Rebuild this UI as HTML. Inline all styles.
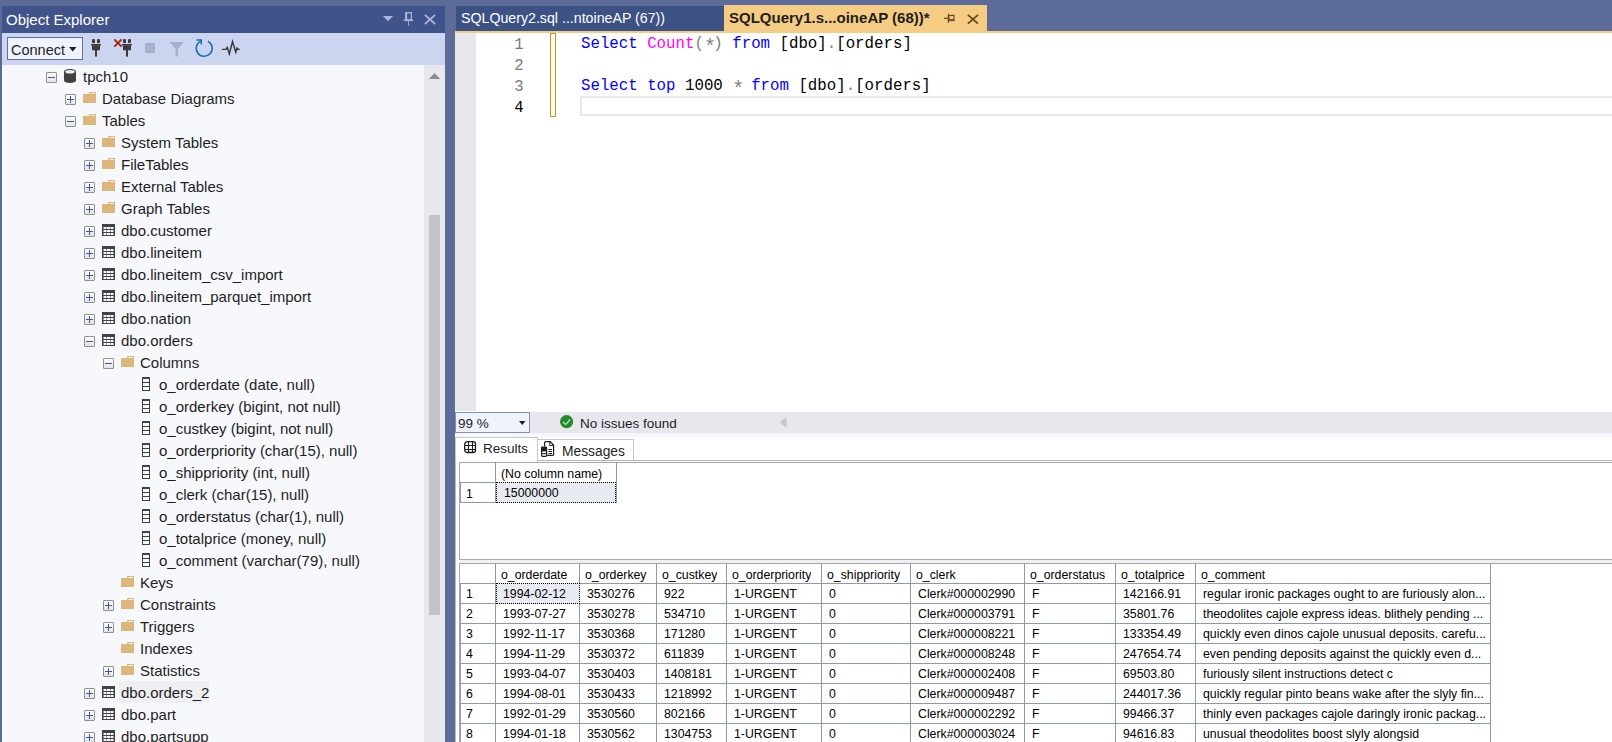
<!DOCTYPE html><html><head><meta charset="utf-8"><style>
*{margin:0;padding:0;box-sizing:border-box}
html,body{width:1612px;height:742px;overflow:hidden;background:#5d6b99;font-family:"Liberation Sans",sans-serif;position:relative}
.a{position:absolute}
.t{position:absolute;white-space:pre;font-family:"Liberation Sans",sans-serif}
.tr{position:absolute;white-space:pre;font-size:15px;line-height:22px;color:#1e1e1e;height:22px}
.cd{position:absolute;white-space:pre;font-family:"Liberation Mono",monospace;font-size:15.75px;line-height:21px;height:21px}
.ln{position:absolute;width:40px;text-align:right;font-family:"Liberation Mono",monospace;font-size:15.6px;line-height:21px;color:#7a7a7a}
.g{position:absolute;white-space:pre;font-size:12.3px;line-height:20px;color:#000;overflow:hidden}
svg{position:absolute;overflow:visible}
</style></head><body>
<div class="a" style="left:2px;top:6px;width:443px;height:27px;background:#40538a"></div>
<div class="t" style="left:6px;top:9px;font-size:15px;line-height:22px;color:#fff">Object Explorer</div>
<svg style="left:383px;top:16px" width="10" height="6"><path d="M0 0 H10 L5 5.2 Z" fill="#a9b3db"/></svg>
<svg style="left:403px;top:11px" width="11" height="16"><rect x="2.65" y="1.65" width="5.7" height="7.2" fill="none" stroke="#a9b3db" stroke-width="1.3"/><rect x="2" y="1" width="2.2" height="8" fill="#a9b3db"/><rect x="0.8" y="8.5" width="9.4" height="1.6" fill="#a9b3db"/><rect x="5.05" y="10" width="0.9" height="5" fill="#a9b3db"/></svg>
<svg style="left:424px;top:13.5px" width="12" height="11"><path d="M0.9 0.9 L11.1 10 M11.1 0.9 L0.9 10" stroke="#a9b3db" stroke-width="1.9"/></svg>
<div class="a" style="left:2px;top:33px;width:443px;height:32px;background:#ccd5f0"></div>
<div class="a" style="left:7px;top:37px;width:76px;height:23px;background:#eef3fd;border:1px solid #5f6f9f"></div>
<div class="t" style="left:11px;top:40px;font-size:14.5px;line-height:20px;color:#1e1e1e">Connect</div>
<svg style="left:69px;top:47px" width="8" height="5"><path d="M0 0 H7.5 L3.75 4.5Z" fill="#1e1e1e"/></svg>
<svg style="left:90px;top:39px" width="12" height="18"><rect x="2" y="0" width="3" height="4.2" rx="1.3" fill="#3c3c3c"/><rect x="7" y="0" width="3" height="4.2" rx="1.3" fill="#3c3c3c"/><path d="M1 5 H11 L10.6 6.8 H1.4 Z" fill="#3c3c3c"/><rect x="2" y="6.5" width="8" height="4.8" fill="#3c3c3c"/><rect x="5" y="11" width="2" height="6.6" fill="#3c3c3c"/></svg>
<svg style="left:121px;top:39px" width="12" height="18"><rect x="2" y="0" width="3" height="4.2" rx="1.3" fill="#3c3c3c"/><rect x="7" y="0" width="3" height="4.2" rx="1.3" fill="#3c3c3c"/><path d="M1 5 H11 L10.6 6.8 H1.4 Z" fill="#3c3c3c"/><rect x="2" y="6.5" width="8" height="4.8" fill="#3c3c3c"/><rect x="5" y="11" width="2" height="6.6" fill="#3c3c3c"/></svg>
<svg style="left:113px;top:38px" width="10" height="10"><path d="M1.3 1.4 L8.6 8.6 M8.6 1.4 L1.3 8.6" stroke="#a52414" stroke-width="1.9"/></svg>
<div class="a" style="left:145px;top:43px;width:10px;height:10px;background:#a9b1c9"></div>
<svg style="left:169px;top:41px" width="16" height="16"><path d="M0.5 1 H15 L9 8 V15.5 H6.5 V8 Z" fill="#a9b1c9"/></svg>
<svg style="left:194px;top:37px" width="20" height="20"><path d="M7.2 3.9 A8 8 0 1 0 13.96 4.24" fill="none" stroke="#1a6fb8" stroke-width="1.5"/><path d="M2.4 2.9 H7.3 V7.6" fill="none" stroke="#1a6fb8" stroke-width="1.5"/></svg>
<svg style="left:221px;top:41px" width="20" height="14"><path d="M1 8.4 H5 L6.3 6.4 L8.3 12.9 L11.5 0.5 L14.8 11.3 L16 7 L17 8.4 H18.8" fill="none" stroke="#333" stroke-width="1.4" stroke-linejoin="miter"/></svg>
<div class="a" style="left:2px;top:65px;width:422px;height:677px;background:#f6f8fc"></div>
<div class="a" style="left:424px;top:65px;width:21px;height:677px;background:#e8e8ec"></div>
<svg style="left:429px;top:73px" width="12" height="7"><path d="M0 6 L5.6 0 L11.2 6Z" fill="#868999"/></svg>
<div class="a" style="left:429px;top:215px;width:11px;height:400px;background:#c2c3c9"></div>
<div class="a" style="left:46px;top:72px;width:11px;height:11px;border:1px solid #909090;border-radius:1px;background:linear-gradient(#fdfdfd,#e3e3e3)"></div><div class="a" style="left:48px;top:77px;width:7px;height:1px;background:#3c5aa0"></div>
<svg style="left:64px;top:69px" width="12" height="14"><path d="M0 2.5 A6 2.5 0 0 1 12 2.5 V11.5 A6 2.5 0 0 1 0 11.5 Z" fill="#424242"/><ellipse cx="6" cy="2.8" rx="4.8" ry="1.8" fill="#f0f0f2"/></svg>
<div class="tr" style="left:83px;top:65.5px">tpch10</div>
<div class="a" style="left:65px;top:94px;width:11px;height:11px;border:1px solid #909090;border-radius:1px;background:linear-gradient(#fdfdfd,#e3e3e3)"></div><div class="a" style="left:67px;top:99px;width:7px;height:1px;background:#3c5aa0"></div><div class="a" style="left:70px;top:96px;width:1px;height:7px;background:#3c5aa0"></div>
<svg style="left:83px;top:92px" width="13" height="11"><path d="M0 2 H5.6 L6.6 0 H13 V11 H0 Z" fill="#dcb67a"/><path d="M7.6 1.5 H12" stroke="#fbf7ef" stroke-width="1"/></svg>
<div class="tr" style="left:102px;top:87.5px">Database Diagrams</div>
<div class="a" style="left:65px;top:116px;width:11px;height:11px;border:1px solid #909090;border-radius:1px;background:linear-gradient(#fdfdfd,#e3e3e3)"></div><div class="a" style="left:67px;top:121px;width:7px;height:1px;background:#3c5aa0"></div>
<svg style="left:83px;top:114px" width="13" height="11"><path d="M0 2 H5.6 L6.6 0 H13 V11 H0 Z" fill="#dcb67a"/><path d="M7.6 1.5 H12" stroke="#fbf7ef" stroke-width="1"/></svg>
<div class="tr" style="left:102px;top:109.5px">Tables</div>
<div class="a" style="left:84px;top:138px;width:11px;height:11px;border:1px solid #909090;border-radius:1px;background:linear-gradient(#fdfdfd,#e3e3e3)"></div><div class="a" style="left:86px;top:143px;width:7px;height:1px;background:#3c5aa0"></div><div class="a" style="left:89px;top:140px;width:1px;height:7px;background:#3c5aa0"></div>
<svg style="left:102px;top:136px" width="13" height="11"><path d="M0 2 H5.6 L6.6 0 H13 V11 H0 Z" fill="#dcb67a"/><path d="M7.6 1.5 H12" stroke="#fbf7ef" stroke-width="1"/></svg>
<div class="tr" style="left:121px;top:131.5px">System Tables</div>
<div class="a" style="left:84px;top:160px;width:11px;height:11px;border:1px solid #909090;border-radius:1px;background:linear-gradient(#fdfdfd,#e3e3e3)"></div><div class="a" style="left:86px;top:165px;width:7px;height:1px;background:#3c5aa0"></div><div class="a" style="left:89px;top:162px;width:1px;height:7px;background:#3c5aa0"></div>
<svg style="left:102px;top:158px" width="13" height="11"><path d="M0 2 H5.6 L6.6 0 H13 V11 H0 Z" fill="#dcb67a"/><path d="M7.6 1.5 H12" stroke="#fbf7ef" stroke-width="1"/></svg>
<div class="tr" style="left:121px;top:153.5px">FileTables</div>
<div class="a" style="left:84px;top:182px;width:11px;height:11px;border:1px solid #909090;border-radius:1px;background:linear-gradient(#fdfdfd,#e3e3e3)"></div><div class="a" style="left:86px;top:187px;width:7px;height:1px;background:#3c5aa0"></div><div class="a" style="left:89px;top:184px;width:1px;height:7px;background:#3c5aa0"></div>
<svg style="left:102px;top:180px" width="13" height="11"><path d="M0 2 H5.6 L6.6 0 H13 V11 H0 Z" fill="#dcb67a"/><path d="M7.6 1.5 H12" stroke="#fbf7ef" stroke-width="1"/></svg>
<div class="tr" style="left:121px;top:175.5px">External Tables</div>
<div class="a" style="left:84px;top:204px;width:11px;height:11px;border:1px solid #909090;border-radius:1px;background:linear-gradient(#fdfdfd,#e3e3e3)"></div><div class="a" style="left:86px;top:209px;width:7px;height:1px;background:#3c5aa0"></div><div class="a" style="left:89px;top:206px;width:1px;height:7px;background:#3c5aa0"></div>
<svg style="left:102px;top:202px" width="13" height="11"><path d="M0 2 H5.6 L6.6 0 H13 V11 H0 Z" fill="#dcb67a"/><path d="M7.6 1.5 H12" stroke="#fbf7ef" stroke-width="1"/></svg>
<div class="tr" style="left:121px;top:197.5px">Graph Tables</div>
<div class="a" style="left:84px;top:226px;width:11px;height:11px;border:1px solid #909090;border-radius:1px;background:linear-gradient(#fdfdfd,#e3e3e3)"></div><div class="a" style="left:86px;top:231px;width:7px;height:1px;background:#3c5aa0"></div><div class="a" style="left:89px;top:228px;width:1px;height:7px;background:#3c5aa0"></div>
<svg style="left:102px;top:224px" width="13" height="12"><rect x="0" y="0" width="13" height="12" fill="#424242"/><rect x="1.5" y="3" width="3" height="2" fill="#f6f8fc"/><rect x="5" y="3" width="3" height="2" fill="#f6f8fc"/><rect x="8.5" y="3" width="3" height="2" fill="#f6f8fc"/><rect x="1.5" y="6" width="3" height="2" fill="#f6f8fc"/><rect x="5" y="6" width="3" height="2" fill="#f6f8fc"/><rect x="8.5" y="6" width="3" height="2" fill="#f6f8fc"/><rect x="1.5" y="9" width="3" height="2" fill="#f6f8fc"/><rect x="5" y="9" width="3" height="2" fill="#f6f8fc"/><rect x="8.5" y="9" width="3" height="2" fill="#f6f8fc"/></svg>
<div class="tr" style="left:121px;top:219.5px">dbo.customer</div>
<div class="a" style="left:84px;top:248px;width:11px;height:11px;border:1px solid #909090;border-radius:1px;background:linear-gradient(#fdfdfd,#e3e3e3)"></div><div class="a" style="left:86px;top:253px;width:7px;height:1px;background:#3c5aa0"></div><div class="a" style="left:89px;top:250px;width:1px;height:7px;background:#3c5aa0"></div>
<svg style="left:102px;top:246px" width="13" height="12"><rect x="0" y="0" width="13" height="12" fill="#424242"/><rect x="1.5" y="3" width="3" height="2" fill="#f6f8fc"/><rect x="5" y="3" width="3" height="2" fill="#f6f8fc"/><rect x="8.5" y="3" width="3" height="2" fill="#f6f8fc"/><rect x="1.5" y="6" width="3" height="2" fill="#f6f8fc"/><rect x="5" y="6" width="3" height="2" fill="#f6f8fc"/><rect x="8.5" y="6" width="3" height="2" fill="#f6f8fc"/><rect x="1.5" y="9" width="3" height="2" fill="#f6f8fc"/><rect x="5" y="9" width="3" height="2" fill="#f6f8fc"/><rect x="8.5" y="9" width="3" height="2" fill="#f6f8fc"/></svg>
<div class="tr" style="left:121px;top:241.5px">dbo.lineitem</div>
<div class="a" style="left:84px;top:270px;width:11px;height:11px;border:1px solid #909090;border-radius:1px;background:linear-gradient(#fdfdfd,#e3e3e3)"></div><div class="a" style="left:86px;top:275px;width:7px;height:1px;background:#3c5aa0"></div><div class="a" style="left:89px;top:272px;width:1px;height:7px;background:#3c5aa0"></div>
<svg style="left:102px;top:268px" width="13" height="12"><rect x="0" y="0" width="13" height="12" fill="#424242"/><rect x="1.5" y="3" width="3" height="2" fill="#f6f8fc"/><rect x="5" y="3" width="3" height="2" fill="#f6f8fc"/><rect x="8.5" y="3" width="3" height="2" fill="#f6f8fc"/><rect x="1.5" y="6" width="3" height="2" fill="#f6f8fc"/><rect x="5" y="6" width="3" height="2" fill="#f6f8fc"/><rect x="8.5" y="6" width="3" height="2" fill="#f6f8fc"/><rect x="1.5" y="9" width="3" height="2" fill="#f6f8fc"/><rect x="5" y="9" width="3" height="2" fill="#f6f8fc"/><rect x="8.5" y="9" width="3" height="2" fill="#f6f8fc"/></svg>
<div class="tr" style="left:121px;top:263.5px">dbo.lineitem_csv_import</div>
<div class="a" style="left:84px;top:292px;width:11px;height:11px;border:1px solid #909090;border-radius:1px;background:linear-gradient(#fdfdfd,#e3e3e3)"></div><div class="a" style="left:86px;top:297px;width:7px;height:1px;background:#3c5aa0"></div><div class="a" style="left:89px;top:294px;width:1px;height:7px;background:#3c5aa0"></div>
<svg style="left:102px;top:290px" width="13" height="12"><rect x="0" y="0" width="13" height="12" fill="#424242"/><rect x="1.5" y="3" width="3" height="2" fill="#f6f8fc"/><rect x="5" y="3" width="3" height="2" fill="#f6f8fc"/><rect x="8.5" y="3" width="3" height="2" fill="#f6f8fc"/><rect x="1.5" y="6" width="3" height="2" fill="#f6f8fc"/><rect x="5" y="6" width="3" height="2" fill="#f6f8fc"/><rect x="8.5" y="6" width="3" height="2" fill="#f6f8fc"/><rect x="1.5" y="9" width="3" height="2" fill="#f6f8fc"/><rect x="5" y="9" width="3" height="2" fill="#f6f8fc"/><rect x="8.5" y="9" width="3" height="2" fill="#f6f8fc"/></svg>
<div class="tr" style="left:121px;top:285.5px">dbo.lineitem_parquet_import</div>
<div class="a" style="left:84px;top:314px;width:11px;height:11px;border:1px solid #909090;border-radius:1px;background:linear-gradient(#fdfdfd,#e3e3e3)"></div><div class="a" style="left:86px;top:319px;width:7px;height:1px;background:#3c5aa0"></div><div class="a" style="left:89px;top:316px;width:1px;height:7px;background:#3c5aa0"></div>
<svg style="left:102px;top:312px" width="13" height="12"><rect x="0" y="0" width="13" height="12" fill="#424242"/><rect x="1.5" y="3" width="3" height="2" fill="#f6f8fc"/><rect x="5" y="3" width="3" height="2" fill="#f6f8fc"/><rect x="8.5" y="3" width="3" height="2" fill="#f6f8fc"/><rect x="1.5" y="6" width="3" height="2" fill="#f6f8fc"/><rect x="5" y="6" width="3" height="2" fill="#f6f8fc"/><rect x="8.5" y="6" width="3" height="2" fill="#f6f8fc"/><rect x="1.5" y="9" width="3" height="2" fill="#f6f8fc"/><rect x="5" y="9" width="3" height="2" fill="#f6f8fc"/><rect x="8.5" y="9" width="3" height="2" fill="#f6f8fc"/></svg>
<div class="tr" style="left:121px;top:307.5px">dbo.nation</div>
<div class="a" style="left:84px;top:336px;width:11px;height:11px;border:1px solid #909090;border-radius:1px;background:linear-gradient(#fdfdfd,#e3e3e3)"></div><div class="a" style="left:86px;top:341px;width:7px;height:1px;background:#3c5aa0"></div>
<svg style="left:102px;top:334px" width="13" height="12"><rect x="0" y="0" width="13" height="12" fill="#424242"/><rect x="1.5" y="3" width="3" height="2" fill="#f6f8fc"/><rect x="5" y="3" width="3" height="2" fill="#f6f8fc"/><rect x="8.5" y="3" width="3" height="2" fill="#f6f8fc"/><rect x="1.5" y="6" width="3" height="2" fill="#f6f8fc"/><rect x="5" y="6" width="3" height="2" fill="#f6f8fc"/><rect x="8.5" y="6" width="3" height="2" fill="#f6f8fc"/><rect x="1.5" y="9" width="3" height="2" fill="#f6f8fc"/><rect x="5" y="9" width="3" height="2" fill="#f6f8fc"/><rect x="8.5" y="9" width="3" height="2" fill="#f6f8fc"/></svg>
<div class="tr" style="left:121px;top:329.5px">dbo.orders</div>
<div class="a" style="left:103px;top:358px;width:11px;height:11px;border:1px solid #909090;border-radius:1px;background:linear-gradient(#fdfdfd,#e3e3e3)"></div><div class="a" style="left:105px;top:363px;width:7px;height:1px;background:#3c5aa0"></div>
<svg style="left:121px;top:356px" width="13" height="11"><path d="M0 2 H5.6 L6.6 0 H13 V11 H0 Z" fill="#dcb67a"/><path d="M7.6 1.5 H12" stroke="#fbf7ef" stroke-width="1"/></svg>
<div class="tr" style="left:140px;top:351.5px">Columns</div>
<svg style="left:142px;top:377px" width="8" height="14"><rect x="0.5" y="0.5" width="7" height="13" fill="#f6f8fc" stroke="#424242"/><rect x="0" y="0" width="8" height="2" fill="#424242"/><path d="M1 5.5 H7 M1 9.5 H7" stroke="#424242"/></svg>
<div class="tr" style="left:159px;top:373.5px">o_orderdate (date, null)</div>
<svg style="left:142px;top:399px" width="8" height="14"><rect x="0.5" y="0.5" width="7" height="13" fill="#f6f8fc" stroke="#424242"/><rect x="0" y="0" width="8" height="2" fill="#424242"/><path d="M1 5.5 H7 M1 9.5 H7" stroke="#424242"/></svg>
<div class="tr" style="left:159px;top:395.5px">o_orderkey (bigint, not null)</div>
<svg style="left:142px;top:421px" width="8" height="14"><rect x="0.5" y="0.5" width="7" height="13" fill="#f6f8fc" stroke="#424242"/><rect x="0" y="0" width="8" height="2" fill="#424242"/><path d="M1 5.5 H7 M1 9.5 H7" stroke="#424242"/></svg>
<div class="tr" style="left:159px;top:417.5px">o_custkey (bigint, not null)</div>
<svg style="left:142px;top:443px" width="8" height="14"><rect x="0.5" y="0.5" width="7" height="13" fill="#f6f8fc" stroke="#424242"/><rect x="0" y="0" width="8" height="2" fill="#424242"/><path d="M1 5.5 H7 M1 9.5 H7" stroke="#424242"/></svg>
<div class="tr" style="left:159px;top:439.5px">o_orderpriority (char(15), null)</div>
<svg style="left:142px;top:465px" width="8" height="14"><rect x="0.5" y="0.5" width="7" height="13" fill="#f6f8fc" stroke="#424242"/><rect x="0" y="0" width="8" height="2" fill="#424242"/><path d="M1 5.5 H7 M1 9.5 H7" stroke="#424242"/></svg>
<div class="tr" style="left:159px;top:461.5px">o_shippriority (int, null)</div>
<svg style="left:142px;top:487px" width="8" height="14"><rect x="0.5" y="0.5" width="7" height="13" fill="#f6f8fc" stroke="#424242"/><rect x="0" y="0" width="8" height="2" fill="#424242"/><path d="M1 5.5 H7 M1 9.5 H7" stroke="#424242"/></svg>
<div class="tr" style="left:159px;top:483.5px">o_clerk (char(15), null)</div>
<svg style="left:142px;top:509px" width="8" height="14"><rect x="0.5" y="0.5" width="7" height="13" fill="#f6f8fc" stroke="#424242"/><rect x="0" y="0" width="8" height="2" fill="#424242"/><path d="M1 5.5 H7 M1 9.5 H7" stroke="#424242"/></svg>
<div class="tr" style="left:159px;top:505.5px">o_orderstatus (char(1), null)</div>
<svg style="left:142px;top:531px" width="8" height="14"><rect x="0.5" y="0.5" width="7" height="13" fill="#f6f8fc" stroke="#424242"/><rect x="0" y="0" width="8" height="2" fill="#424242"/><path d="M1 5.5 H7 M1 9.5 H7" stroke="#424242"/></svg>
<div class="tr" style="left:159px;top:527.5px">o_totalprice (money, null)</div>
<svg style="left:142px;top:553px" width="8" height="14"><rect x="0.5" y="0.5" width="7" height="13" fill="#f6f8fc" stroke="#424242"/><rect x="0" y="0" width="8" height="2" fill="#424242"/><path d="M1 5.5 H7 M1 9.5 H7" stroke="#424242"/></svg>
<div class="tr" style="left:159px;top:549.5px">o_comment (varchar(79), null)</div>
<svg style="left:121px;top:576px" width="13" height="11"><path d="M0 2 H5.6 L6.6 0 H13 V11 H0 Z" fill="#dcb67a"/><path d="M7.6 1.5 H12" stroke="#fbf7ef" stroke-width="1"/></svg>
<div class="tr" style="left:140px;top:571.5px">Keys</div>
<div class="a" style="left:103px;top:600px;width:11px;height:11px;border:1px solid #909090;border-radius:1px;background:linear-gradient(#fdfdfd,#e3e3e3)"></div><div class="a" style="left:105px;top:605px;width:7px;height:1px;background:#3c5aa0"></div><div class="a" style="left:108px;top:602px;width:1px;height:7px;background:#3c5aa0"></div>
<svg style="left:121px;top:598px" width="13" height="11"><path d="M0 2 H5.6 L6.6 0 H13 V11 H0 Z" fill="#dcb67a"/><path d="M7.6 1.5 H12" stroke="#fbf7ef" stroke-width="1"/></svg>
<div class="tr" style="left:140px;top:593.5px">Constraints</div>
<div class="a" style="left:103px;top:622px;width:11px;height:11px;border:1px solid #909090;border-radius:1px;background:linear-gradient(#fdfdfd,#e3e3e3)"></div><div class="a" style="left:105px;top:627px;width:7px;height:1px;background:#3c5aa0"></div><div class="a" style="left:108px;top:624px;width:1px;height:7px;background:#3c5aa0"></div>
<svg style="left:121px;top:620px" width="13" height="11"><path d="M0 2 H5.6 L6.6 0 H13 V11 H0 Z" fill="#dcb67a"/><path d="M7.6 1.5 H12" stroke="#fbf7ef" stroke-width="1"/></svg>
<div class="tr" style="left:140px;top:615.5px">Triggers</div>
<svg style="left:121px;top:642px" width="13" height="11"><path d="M0 2 H5.6 L6.6 0 H13 V11 H0 Z" fill="#dcb67a"/><path d="M7.6 1.5 H12" stroke="#fbf7ef" stroke-width="1"/></svg>
<div class="tr" style="left:140px;top:637.5px">Indexes</div>
<div class="a" style="left:103px;top:666px;width:11px;height:11px;border:1px solid #909090;border-radius:1px;background:linear-gradient(#fdfdfd,#e3e3e3)"></div><div class="a" style="left:105px;top:671px;width:7px;height:1px;background:#3c5aa0"></div><div class="a" style="left:108px;top:668px;width:1px;height:7px;background:#3c5aa0"></div>
<svg style="left:121px;top:664px" width="13" height="11"><path d="M0 2 H5.6 L6.6 0 H13 V11 H0 Z" fill="#dcb67a"/><path d="M7.6 1.5 H12" stroke="#fbf7ef" stroke-width="1"/></svg>
<div class="tr" style="left:140px;top:659.5px">Statistics</div>
<div class="a" style="left:119px;top:681px;width:90px;height:22px;background:#eeeff3"></div>
<div class="a" style="left:84px;top:688px;width:11px;height:11px;border:1px solid #909090;border-radius:1px;background:linear-gradient(#fdfdfd,#e3e3e3)"></div><div class="a" style="left:86px;top:693px;width:7px;height:1px;background:#3c5aa0"></div><div class="a" style="left:89px;top:690px;width:1px;height:7px;background:#3c5aa0"></div>
<svg style="left:102px;top:686px" width="13" height="12"><rect x="0" y="0" width="13" height="12" fill="#424242"/><rect x="1.5" y="3" width="3" height="2" fill="#f6f8fc"/><rect x="5" y="3" width="3" height="2" fill="#f6f8fc"/><rect x="8.5" y="3" width="3" height="2" fill="#f6f8fc"/><rect x="1.5" y="6" width="3" height="2" fill="#f6f8fc"/><rect x="5" y="6" width="3" height="2" fill="#f6f8fc"/><rect x="8.5" y="6" width="3" height="2" fill="#f6f8fc"/><rect x="1.5" y="9" width="3" height="2" fill="#f6f8fc"/><rect x="5" y="9" width="3" height="2" fill="#f6f8fc"/><rect x="8.5" y="9" width="3" height="2" fill="#f6f8fc"/></svg>
<div class="tr" style="left:121px;top:681.5px">dbo.orders_2</div>
<div class="a" style="left:84px;top:710px;width:11px;height:11px;border:1px solid #909090;border-radius:1px;background:linear-gradient(#fdfdfd,#e3e3e3)"></div><div class="a" style="left:86px;top:715px;width:7px;height:1px;background:#3c5aa0"></div><div class="a" style="left:89px;top:712px;width:1px;height:7px;background:#3c5aa0"></div>
<svg style="left:102px;top:708px" width="13" height="12"><rect x="0" y="0" width="13" height="12" fill="#424242"/><rect x="1.5" y="3" width="3" height="2" fill="#f6f8fc"/><rect x="5" y="3" width="3" height="2" fill="#f6f8fc"/><rect x="8.5" y="3" width="3" height="2" fill="#f6f8fc"/><rect x="1.5" y="6" width="3" height="2" fill="#f6f8fc"/><rect x="5" y="6" width="3" height="2" fill="#f6f8fc"/><rect x="8.5" y="6" width="3" height="2" fill="#f6f8fc"/><rect x="1.5" y="9" width="3" height="2" fill="#f6f8fc"/><rect x="5" y="9" width="3" height="2" fill="#f6f8fc"/><rect x="8.5" y="9" width="3" height="2" fill="#f6f8fc"/></svg>
<div class="tr" style="left:121px;top:703.5px">dbo.part</div>
<div class="a" style="left:84px;top:732px;width:11px;height:11px;border:1px solid #909090;border-radius:1px;background:linear-gradient(#fdfdfd,#e3e3e3)"></div><div class="a" style="left:86px;top:737px;width:7px;height:1px;background:#3c5aa0"></div><div class="a" style="left:89px;top:734px;width:1px;height:7px;background:#3c5aa0"></div>
<svg style="left:102px;top:730px" width="13" height="12"><rect x="0" y="0" width="13" height="12" fill="#424242"/><rect x="1.5" y="3" width="3" height="2" fill="#f6f8fc"/><rect x="5" y="3" width="3" height="2" fill="#f6f8fc"/><rect x="8.5" y="3" width="3" height="2" fill="#f6f8fc"/><rect x="1.5" y="6" width="3" height="2" fill="#f6f8fc"/><rect x="5" y="6" width="3" height="2" fill="#f6f8fc"/><rect x="8.5" y="6" width="3" height="2" fill="#f6f8fc"/><rect x="1.5" y="9" width="3" height="2" fill="#f6f8fc"/><rect x="5" y="9" width="3" height="2" fill="#f6f8fc"/><rect x="8.5" y="9" width="3" height="2" fill="#f6f8fc"/></svg>
<div class="tr" style="left:121px;top:725.5px">dbo.partsupp</div>
<div class="a" style="left:456px;top:6px;width:268px;height:25px;background:#3d5284"></div>
<div class="t" style="left:461px;top:7px;font-size:14.2px;line-height:22px;color:#fff">SQLQuery2.sql ...ntoineAP (67))</div>
<div class="a" style="left:724px;top:5px;width:263px;height:27px;background:#f5cc84"></div>
<div class="t" style="left:729px;top:7px;font-size:15px;font-weight:bold;line-height:22px;color:#1e1e1e">SQLQuery1.s...oineAP (68))*</div>
<svg style="left:944px;top:13px" width="12" height="11"><path d="M0 5.3 H4.5 M4.4 0.8 V9.8" stroke="#6b4a1e" stroke-width="1.2"/><rect x="4.9" y="2.4" width="5" height="4.6" fill="none" stroke="#6b4a1e" stroke-width="1.2"/><path d="M4.5 7.3 H10.5" stroke="#6b4a1e" stroke-width="1.7"/></svg>
<svg style="left:967px;top:13.5px" width="12" height="11"><path d="M0.9 0.9 L11 9.6 M11 0.9 L0.9 9.6" stroke="#6b4a1e" stroke-width="1.9"/></svg>
<div class="a" style="left:455px;top:31px;width:1157px;height:2px;background:#f5cc84"></div>
<div class="a" style="left:455px;top:33px;width:1157px;height:379px;background:#fff"></div>
<div class="a" style="left:455px;top:33px;width:21px;height:378px;background:#e6e7eb"></div>
<div class="a" style="left:550px;top:33px;width:6px;height:84px;border:1px solid #b89a2a;background:#fffdf0"></div>
<div class="a" style="left:580px;top:96px;width:1032px;height:20px;border:2px solid #e8e8f0;border-right:none"></div>
<div class="ln" style="left:483.5px;top:34.5px;color:#7a7a7a">1</div>
<div class="ln" style="left:483.5px;top:55.5px;color:#7a7a7a">2</div>
<div class="ln" style="left:483.5px;top:76.5px;color:#7a7a7a">3</div>
<div class="ln" style="left:483.5px;top:97.5px;color:#000">4</div>
<div class="cd" style="left:581px;top:33.5px;color:#000"><span style="color:#0000ff">Select</span> <span style="color:#ff00ff">Count</span><span style="color:#808080">(</span><span style="color:#808080;display:inline-block;width:9.45px;height:21px;text-align:center;font-size:20px;line-height:21px;vertical-align:top;position:relative;top:3px">*</span><span style="color:#808080">)</span> <span style="color:#0000ff">from</span> [dbo]<span style="color:#808080">.</span>[orders]</div>
<div class="cd" style="left:581px;top:75.5px;color:#000"><span style="color:#0000ff">Select</span> <span style="color:#0000ff">top</span> 1000 <span style="color:#808080;display:inline-block;width:9.45px;height:21px;text-align:center;font-size:20px;line-height:21px;vertical-align:top;position:relative;top:3px">*</span> <span style="color:#0000ff">from</span> [dbo]<span style="color:#808080">.</span>[orders]</div>
<div class="a" style="left:455px;top:412px;width:1157px;height:21px;background:#e7e7ed"></div>
<div class="a" style="left:455px;top:412px;width:75px;height:21px;background:#eff3fb;border:1px solid #8393ad"></div>
<div class="t" style="left:458px;top:414px;font-size:13.5px;line-height:20px;color:#1e1e1e">99 %</div>
<svg style="left:519px;top:421px" width="7" height="5"><path d="M0 0 H6.5 L3.25 4Z" fill="#1e1e1e"/></svg>
<svg style="left:560px;top:415px" width="14" height="14"><circle cx="6.6" cy="6.7" r="6.6" fill="#248a2a"/><path d="M2.9 7 L5.7 9.4 L10.2 4.5" fill="none" stroke="#c4e4c4" stroke-width="1.15"/></svg>
<div class="t" style="left:580px;top:413.5px;font-size:13.5px;line-height:20px;color:#1e1e1e">No issues found</div>
<svg style="left:780px;top:417px" width="7" height="11"><path d="M6.5 0 V11 L0 5.5Z" fill="#c3c5d0"/></svg>
<div class="a" style="left:455px;top:433px;width:1157px;height:4px;background:#f6f7fc"></div>
<div class="a" style="left:455px;top:437px;width:1157px;height:305px;background:#fff"></div>
<div class="a" style="left:455px;top:437px;width:83px;height:25px;background:#fff;border:1px solid #c8c8c8;border-bottom:none"></div>
<div class="a" style="left:537px;top:439px;width:97px;height:22px;background:#fff;border:1px solid #c8c8c8;border-bottom:none"></div>
<div class="a" style="left:538px;top:460px;width:1074px;height:1px;background:#b4b4b4"></div>
<div class="a" style="left:455px;top:462px;width:1px;height:280px;background:#bcbcbc"></div>
<svg style="left:464px;top:441px" width="13" height="13"><rect x="0.7" y="0.7" width="10.8" height="10.8" rx="2.6" fill="none" stroke="#1e1e1e" stroke-width="1.3"/><path d="M4.5 0.8 V11.5 M8.5 0.8 V11.5 M0.8 4.5 H11.5 M0.8 8.5 H11.5" stroke="#1e1e1e" stroke-width="1.1"/></svg>
<div class="t" style="left:483px;top:438px;font-size:13.5px;line-height:22px;color:#1e1e1e">Results</div>
<svg style="left:541px;top:441px" width="14" height="17"><path d="M3.6 5.5 V1.6 Q3.6 0.7 4.5 0.7 H9.2 L12.6 4.1 V13.6 Q12.6 14.4 11.8 14.4 H6.3" fill="none" stroke="#1e1e1e" stroke-width="1.2"/><path d="M8.8 0.8 V4.5 H12.5" fill="none" stroke="#1e1e1e" stroke-width="1"/><rect x="0.6" y="6.1" width="5" height="9.3" rx="0.8" fill="#fff" stroke="#1e1e1e" stroke-width="1.2"/><rect x="0.6" y="6.1" width="5" height="4.3" fill="#1e1e1e"/><path d="M0.8 12.7 H5.4" stroke="#1e1e1e" stroke-width="1"/><path d="M7.5 8.5 H11 M7.5 10.5 H11 M7.5 12.5 H11" stroke="#1e1e1e" stroke-width="1"/></svg>
<div class="t" style="left:562px;top:441px;font-size:13.8px;line-height:22px;color:#1e1e1e">Messages</div>
<div class="a" style="left:459px;top:462px;width:1153px;height:1px;background:#a6a9b3"></div>
<div class="a" style="left:459px;top:462px;width:1px;height:98px;background:#a6a9b3"></div>
<div class="a" style="left:459px;top:559px;width:1153px;height:1px;background:#a6a9b3"></div>
<div class="a" style="left:459px;top:560px;width:1153px;height:3px;background:#f0f0f0"></div>
<div class="a" style="left:459px;top:563px;width:1153px;height:1px;background:#a6a9b3"></div>
<div class="a" style="left:459px;top:563px;width:1px;height:179px;background:#a6a9b3"></div>
<div class="a" style="left:460px;top:482px;width:1px;height:21px;background:#8e98aa"></div>
<div class="a" style="left:460px;top:482px;width:156px;height:1px;background:#8e98aa"></div>
<div class="a" style="left:460px;top:502px;width:156px;height:1px;background:#8e98aa"></div>
<div class="a" style="left:495px;top:462px;width:1px;height:41px;background:#8e98aa"></div>
<div class="a" style="left:616px;top:462px;width:1px;height:41px;background:#8e98aa"></div>
<div class="a" style="left:496px;top:482px;width:120px;height:21px;background:#e7ebf1;border:1px dotted #000"></div>
<div class="g" style="left:501px;top:464px">(No column name)</div>
<div class="g" style="left:466px;top:484px">1</div>
<div class="g" style="left:504px;top:483px">15000000</div>
<div class="a" style="left:495px;top:563px;width:1px;height:180px;background:#8e98aa"></div>
<div class="a" style="left:579px;top:563px;width:1px;height:180px;background:#8e98aa"></div>
<div class="a" style="left:656px;top:563px;width:1px;height:180px;background:#8e98aa"></div>
<div class="a" style="left:726px;top:563px;width:1px;height:180px;background:#8e98aa"></div>
<div class="a" style="left:821px;top:563px;width:1px;height:180px;background:#8e98aa"></div>
<div class="a" style="left:910px;top:563px;width:1px;height:180px;background:#8e98aa"></div>
<div class="a" style="left:1024px;top:563px;width:1px;height:180px;background:#8e98aa"></div>
<div class="a" style="left:1115px;top:563px;width:1px;height:180px;background:#8e98aa"></div>
<div class="a" style="left:1195px;top:563px;width:1px;height:180px;background:#8e98aa"></div>
<div class="a" style="left:1490px;top:563px;width:1px;height:180px;background:#8e98aa"></div>
<div class="a" style="left:460px;top:583px;width:1031px;height:1px;background:#8e98aa"></div>
<div class="a" style="left:460px;top:603px;width:1031px;height:1px;background:#8e98aa"></div>
<div class="a" style="left:460px;top:623px;width:1031px;height:1px;background:#8e98aa"></div>
<div class="a" style="left:460px;top:643px;width:1031px;height:1px;background:#8e98aa"></div>
<div class="a" style="left:460px;top:663px;width:1031px;height:1px;background:#8e98aa"></div>
<div class="a" style="left:460px;top:683px;width:1031px;height:1px;background:#8e98aa"></div>
<div class="a" style="left:460px;top:703px;width:1031px;height:1px;background:#8e98aa"></div>
<div class="a" style="left:460px;top:723px;width:1031px;height:1px;background:#8e98aa"></div>
<div class="a" style="left:460px;top:743px;width:1031px;height:1px;background:#8e98aa"></div>
<div class="a" style="left:460px;top:583px;width:1px;height:160px;background:#8e98aa"></div>
<div class="a" style="left:496px;top:583px;width:84px;height:21px;background:#e7ebf1;border:1px dotted #000"></div>
<div class="g" style="left:501px;top:565px">o_orderdate</div>
<div class="g" style="left:585px;top:565px">o_orderkey</div>
<div class="g" style="left:662px;top:565px">o_custkey</div>
<div class="g" style="left:732px;top:565px">o_orderpriority</div>
<div class="g" style="left:827px;top:565px">o_shippriority</div>
<div class="g" style="left:916px;top:565px">o_clerk</div>
<div class="g" style="left:1030px;top:565px">o_orderstatus</div>
<div class="g" style="left:1121px;top:565px">o_totalprice</div>
<div class="g" style="left:1201px;top:565px">o_comment</div>
<div class="g" style="left:466px;top:584px;width:27px">1</div>
<div class="g" style="left:503px;top:584px;width:75px">1994-02-12</div>
<div class="g" style="left:587px;top:584px;width:68px">3530276</div>
<div class="g" style="left:664px;top:584px;width:61px">922</div>
<div class="g" style="left:734px;top:584px;width:86px">1-URGENT</div>
<div class="g" style="left:829px;top:584px;width:80px">0</div>
<div class="g" style="left:918px;top:584px;width:105px">Clerk#000002990</div>
<div class="g" style="left:1032px;top:584px;width:82px">F</div>
<div class="g" style="left:1123px;top:584px;width:71px">142166.91</div>
<div class="g" style="left:1203px;top:584px;width:286px">regular ironic packages ought to are furiously alon...</div>
<div class="g" style="left:466px;top:604px;width:27px">2</div>
<div class="g" style="left:503px;top:604px;width:75px">1993-07-27</div>
<div class="g" style="left:587px;top:604px;width:68px">3530278</div>
<div class="g" style="left:664px;top:604px;width:61px">534710</div>
<div class="g" style="left:734px;top:604px;width:86px">1-URGENT</div>
<div class="g" style="left:829px;top:604px;width:80px">0</div>
<div class="g" style="left:918px;top:604px;width:105px">Clerk#000003791</div>
<div class="g" style="left:1032px;top:604px;width:82px">F</div>
<div class="g" style="left:1123px;top:604px;width:71px">35801.76</div>
<div class="g" style="left:1203px;top:604px;width:286px">theodolites cajole express ideas. blithely pending ...</div>
<div class="g" style="left:466px;top:624px;width:27px">3</div>
<div class="g" style="left:503px;top:624px;width:75px">1992-11-17</div>
<div class="g" style="left:587px;top:624px;width:68px">3530368</div>
<div class="g" style="left:664px;top:624px;width:61px">171280</div>
<div class="g" style="left:734px;top:624px;width:86px">1-URGENT</div>
<div class="g" style="left:829px;top:624px;width:80px">0</div>
<div class="g" style="left:918px;top:624px;width:105px">Clerk#000008221</div>
<div class="g" style="left:1032px;top:624px;width:82px">F</div>
<div class="g" style="left:1123px;top:624px;width:71px">133354.49</div>
<div class="g" style="left:1203px;top:624px;width:286px">quickly even dinos cajole unusual deposits. carefu...</div>
<div class="g" style="left:466px;top:644px;width:27px">4</div>
<div class="g" style="left:503px;top:644px;width:75px">1994-11-29</div>
<div class="g" style="left:587px;top:644px;width:68px">3530372</div>
<div class="g" style="left:664px;top:644px;width:61px">611839</div>
<div class="g" style="left:734px;top:644px;width:86px">1-URGENT</div>
<div class="g" style="left:829px;top:644px;width:80px">0</div>
<div class="g" style="left:918px;top:644px;width:105px">Clerk#000008248</div>
<div class="g" style="left:1032px;top:644px;width:82px">F</div>
<div class="g" style="left:1123px;top:644px;width:71px">247654.74</div>
<div class="g" style="left:1203px;top:644px;width:286px">even pending deposits against the quickly even d...</div>
<div class="g" style="left:466px;top:664px;width:27px">5</div>
<div class="g" style="left:503px;top:664px;width:75px">1993-04-07</div>
<div class="g" style="left:587px;top:664px;width:68px">3530403</div>
<div class="g" style="left:664px;top:664px;width:61px">1408181</div>
<div class="g" style="left:734px;top:664px;width:86px">1-URGENT</div>
<div class="g" style="left:829px;top:664px;width:80px">0</div>
<div class="g" style="left:918px;top:664px;width:105px">Clerk#000002408</div>
<div class="g" style="left:1032px;top:664px;width:82px">F</div>
<div class="g" style="left:1123px;top:664px;width:71px">69503.80</div>
<div class="g" style="left:1203px;top:664px;width:286px">furiously silent instructions detect c</div>
<div class="g" style="left:466px;top:684px;width:27px">6</div>
<div class="g" style="left:503px;top:684px;width:75px">1994-08-01</div>
<div class="g" style="left:587px;top:684px;width:68px">3530433</div>
<div class="g" style="left:664px;top:684px;width:61px">1218992</div>
<div class="g" style="left:734px;top:684px;width:86px">1-URGENT</div>
<div class="g" style="left:829px;top:684px;width:80px">0</div>
<div class="g" style="left:918px;top:684px;width:105px">Clerk#000009487</div>
<div class="g" style="left:1032px;top:684px;width:82px">F</div>
<div class="g" style="left:1123px;top:684px;width:71px">244017.36</div>
<div class="g" style="left:1203px;top:684px;width:286px">quickly regular pinto beans wake after the slyly fin...</div>
<div class="g" style="left:466px;top:704px;width:27px">7</div>
<div class="g" style="left:503px;top:704px;width:75px">1992-01-29</div>
<div class="g" style="left:587px;top:704px;width:68px">3530560</div>
<div class="g" style="left:664px;top:704px;width:61px">802166</div>
<div class="g" style="left:734px;top:704px;width:86px">1-URGENT</div>
<div class="g" style="left:829px;top:704px;width:80px">0</div>
<div class="g" style="left:918px;top:704px;width:105px">Clerk#000002292</div>
<div class="g" style="left:1032px;top:704px;width:82px">F</div>
<div class="g" style="left:1123px;top:704px;width:71px">99466.37</div>
<div class="g" style="left:1203px;top:704px;width:286px">thinly even packages cajole daringly ironic packag...</div>
<div class="g" style="left:466px;top:724px;width:27px">8</div>
<div class="g" style="left:503px;top:724px;width:75px">1994-01-18</div>
<div class="g" style="left:587px;top:724px;width:68px">3530562</div>
<div class="g" style="left:664px;top:724px;width:61px">1304753</div>
<div class="g" style="left:734px;top:724px;width:86px">1-URGENT</div>
<div class="g" style="left:829px;top:724px;width:80px">0</div>
<div class="g" style="left:918px;top:724px;width:105px">Clerk#000003024</div>
<div class="g" style="left:1032px;top:724px;width:82px">F</div>
<div class="g" style="left:1123px;top:724px;width:71px">94616.83</div>
<div class="g" style="left:1203px;top:724px;width:286px">unusual theodolites boost slyly alongsid</div>
</body></html>
